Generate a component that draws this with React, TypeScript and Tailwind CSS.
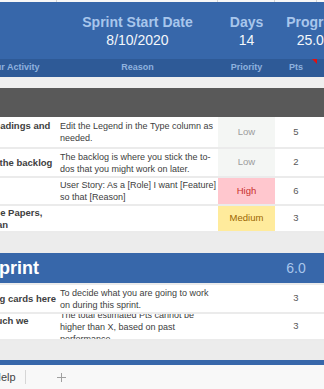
import React from 'react';

type Priority = 'Low' | 'Medium' | 'High';

type Item = {
  activity: string[];
  reason: string[];
  priority?: Priority;
  pts: number;
  h: string;
};

const cols = 'grid grid-cols-[72px_161px_57px_42px_41px]';

const priorityStyle: Record<Priority, string> = {
  Low: 'bg-[#f4f6f4] text-[#9c9c9c]',
  Medium: 'bg-[#ffeb9c] text-[#9c6500]',
  High: 'bg-[#ffc7ce] text-[#c9302c]',
};

const backlog: Item[] = [
  { activity: ['Headings and', '\u00a0'], reason: ['Edit the Legend in the Type column as', 'needed.'], priority: 'Low', pts: 5, h: 'h-[32px]' },
  { activity: ['to the backlog'], reason: ['The backlog is where you stick the to-', 'dos that you might work on later.'], priority: 'Low', pts: 2, h: 'h-[29px]' },
  { activity: [], reason: ['User Story: As a [Role] I want [Feature]', 'so that [Reason]'], priority: 'High', pts: 6, h: 'h-[28px]' },
  { activity: ['Use Papers,', 'Plan'], reason: [], priority: 'Medium', pts: 3, h: 'h-[27px] border-b-0' },
];

const sprint: Item[] = [
  { activity: ['Log cards here'], reason: ['To decide what you are going to work', 'on during this sprint.'], pts: 3, h: 'h-[29px]' },
  { activity: ['much we', 'do'], reason: ['The total estimated Pts cannot be', 'higher than X, based on past', 'performance'], pts: 3, h: 'h-[27px] border-b-0' },
];

function Row({ item }: { item: Item }) {
  return (
    <div className={`${cols} ${item.h} border-b-2 border-[#ebebeb] bg-white overflow-hidden`}>
      <div className="flex flex-col justify-center pl-[3px] text-[9.5px] leading-[12px] font-bold text-[#404040] whitespace-nowrap overflow-hidden">
        {item.activity.map((l, i) => (
          <div key={i}>{l}</div>
        ))}
      </div>
      <div className="flex flex-col justify-center pl-[3px] text-[9px] leading-[12px] text-[#404040] whitespace-nowrap overflow-hidden">
        {item.reason.map((l, i) => (
          <div key={i}>{l}</div>
        ))}
      </div>
      <div className={`flex items-center justify-center text-[9.5px] ${item.priority ? priorityStyle[item.priority] : ''}`}>
        {item.priority}
      </div>
      <div className="flex items-center justify-center text-[9.5px] text-[#595959]">{item.pts}</div>
      <div />
    </div>
  );
}

export default function App() {
  return (
    <div className="w-[324px] h-[389px] overflow-hidden bg-white font-['Liberation_Sans',Arial,sans-serif]">
      <div className="-ml-[15px] w-[373px]">
        {/* column gridlines strip */}
        <div className={`${cols} h-[2px] bg-[#f7f7f7]`}>
          <div className="border-r border-[#d4d4d4]" />
          <div className="border-r border-[#d4d4d4]" />
          <div className="border-r border-[#d4d4d4]" />
          <div className="border-r border-[#d4d4d4]" />
          <div />
        </div>

        {/* title band */}
        <div className={`${cols} h-[57px] items-center bg-[#3767aa] text-[14px] leading-[18px] whitespace-nowrap`}>
          <div />
          <div className="text-center">
            <div className="font-bold text-[#a8c6ec]">Sprint Start Date</div>
            <div className="text-[#f4f7fb]">8/10/2020</div>
          </div>
          <div className="text-center">
            <div className="font-bold text-[#a8c6ec]">Days</div>
            <div className="text-[#f4f7fb]">14</div>
          </div>
          <div className="col-span-2 text-center">
            <div className="font-bold text-[#a8c6ec]">Progress</div>
            <div className="text-[#f4f7fb]">25.0%</div>
          </div>
        </div>

        {/* column headers */}
        <div className={`${cols} h-[18px] items-center bg-[#2e5a97] text-[9px] font-bold text-[#8fb2df] whitespace-nowrap`}>
          <div className="text-right pr-[19px] overflow-hidden">Your Activity</div>
          <div className="text-center">Reason</div>
          <div className="text-center">Priority</div>
          <div className="relative h-full flex items-center justify-center">
            Pts
            <span className="absolute top-0 right-0 border-l-[5px] border-l-transparent border-t-[5px] border-t-[#e01010]" />
          </div>
          <div />
        </div>

        <div className="h-[11px] bg-[#efefef]" />
        <div className="h-[29px] bg-[#595959]" />

        {backlog.map((item, i) => (
          <Row key={i} item={item} />
        ))}

        <div className="h-[20px] bg-[#ececec]" />

        {/* sprint band */}
        <div className={`${cols} h-[30px] items-center bg-[#3767aa] border-b-2 border-[#ebebeb] box-content`}>
          <div className="col-span-3 pl-[2px] text-[18px] font-bold text-white">Sprint</div>
          <div className="text-center text-[14px] text-[#a8c6ec]">6.0</div>
          <div />
        </div>

        {sprint.map((item, i) => (
          <Row key={i} item={item} />
        ))}

        <div className="h-[19px] bg-[#ececec]" />
        <div className="h-[5px] bg-[#3767aa]" />
      </div>

      {/* sheet tabs */}
      <div className="flex items-center h-[24px] bg-[#f8f8f8]">
        <span className="-ml-[7px] pr-[9px] text-[11px] text-[#444]">Help</span>
        <span className="w-px h-[14px] bg-[#d6d6d6]" />
        <svg className="ml-[31px]" width="9" height="9" viewBox="0 0 9 9">
          <path d="M4.5 0v9M0 4.5h9" stroke="#a0a0a0" strokeWidth="1" />
        </svg>
      </div>
    </div>
  );
}
